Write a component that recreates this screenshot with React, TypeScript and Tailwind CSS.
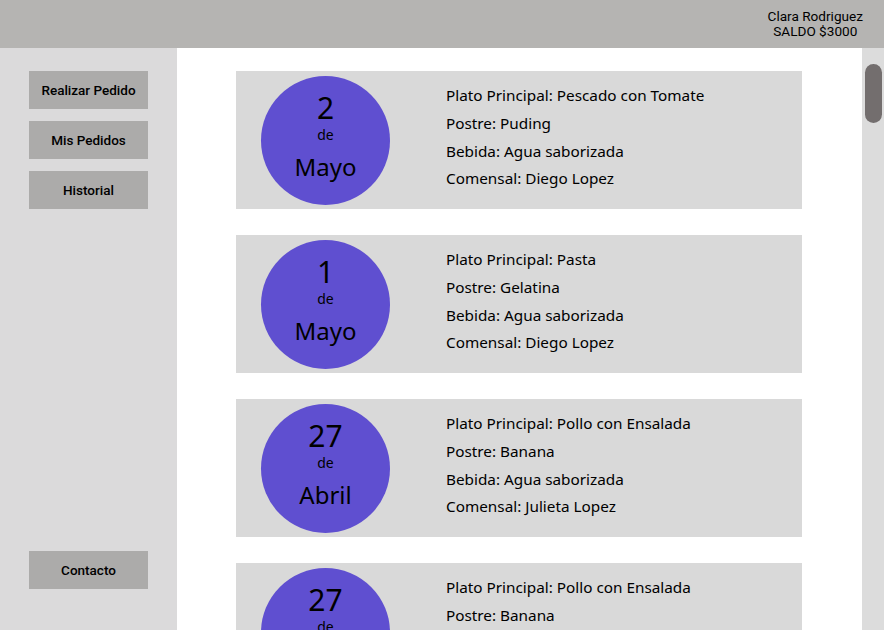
import React from 'react';

const pedidos = [
  { dia: '2', mes: 'Mayo', plato: 'Pescado con Tomate', postre: 'Puding', bebida: 'Agua saborizada', comensal: 'Diego Lopez' },
  { dia: '1', mes: 'Mayo', plato: 'Pasta', postre: 'Gelatina', bebida: 'Agua saborizada', comensal: 'Diego Lopez' },
  { dia: '27', mes: 'Abril', plato: 'Pollo con Ensalada', postre: 'Banana', bebida: 'Agua saborizada', comensal: 'Julieta Lopez' },
  { dia: '27', mes: 'Abril', plato: 'Pollo con Ensalada', postre: 'Banana', bebida: 'Agua saborizada', comensal: 'Julieta Lopez' },
];

function SideButton({ label }: { label: string }) {
  return (
    <button className="w-[119px] h-[38px] bg-[#acabaa] text-[13.5px] font-medium text-black">
      {label}
    </button>
  );
}

export default function App() {
  return (
    <div className="w-[884px] h-[630px] flex flex-col overflow-hidden font-['Roboto',sans-serif]">
      {/* Header */}
      <header className="h-[48px] bg-[#b5b4b2] flex justify-end items-center pr-[21px] shrink-0">
        <div className="text-[13.6px] leading-[15px] text-black text-center">
          <div>Clara Rodriguez</div>
          <div>SALDO $3000</div>
        </div>
      </header>

      <div className="flex flex-1 min-h-0">
        {/* Sidebar */}
        <aside className="w-[177px] bg-[#dbdadb] flex flex-col justify-between items-center pt-[23px] pb-[41px] shrink-0">
          <div className="flex flex-col gap-[12px]">
            <SideButton label="Realizar Pedido" />
            <SideButton label="Mis Pedidos" />
            <SideButton label="Historial" />
          </div>
          <SideButton label="Contacto" />
        </aside>

        {/* Content */}
        <main className="flex-1 bg-white overflow-hidden pt-[23px] pl-[59px] font-['Noto_Sans',sans-serif]">
          <div className="flex flex-col gap-[26px]">
            {pedidos.map((p, i) => (
              <div key={i} className="w-[566px] h-[138px] shrink-0 bg-[#d9d9d9] flex items-center">
                <div className="ml-[25px] w-[129px] h-[129px] shrink-0 rounded-full bg-[#5f4fd0] flex flex-col items-center justify-center pb-[6px] text-black">
                  <div className="text-[30px] leading-[30px]">{p.dia}</div>
                  <div className="text-[14px] leading-[20px] mt-[2px]">de</div>
                  <div className="text-[24px] leading-[30px] mt-[7px]">{p.mes}</div>
                </div>
                <div className="ml-[56px] mb-[5px] flex flex-col text-[15.3px] leading-[27.7px] text-black">
                  <div>Plato Principal: {p.plato}</div>
                  <div>Postre: {p.postre}</div>
                  <div>Bebida: {p.bebida}</div>
                  <div>Comensal: {p.comensal}</div>
                </div>
              </div>
            ))}
          </div>
        </main>

        {/* Scrollbar */}
        <div className="w-[22px] bg-[#dcdcdc] shrink-0 pt-[16px] flex justify-center">
          <div className="w-[17px] h-[59px] rounded-full bg-[#736e6e]" />
        </div>
      </div>
    </div>
  );
}
